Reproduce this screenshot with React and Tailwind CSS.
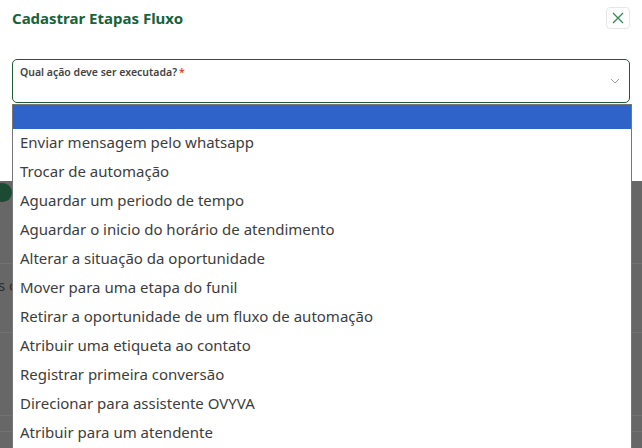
const options = [
  'Enviar mensagem pelo whatsapp',
  'Trocar de automação',
  'Aguardar um periodo de tempo',
  'Aguardar o inicio do horário de atendimento',
  'Alterar a situação da oportunidade',
  'Mover para uma etapa do funil',
  'Retirar a oportunidade de um fluxo de automação',
  'Atribuir uma etiqueta ao contato',
  'Registrar primeira conversão',
  'Direcionar para assistente OVYVA',
  'Atribuir para um atendente',
]

function OptionList() {
  return (
    <div className="absolute left-[12px] top-[104px] w-[620px] border-x border-t border-[#767676] bg-white">
      <div className="h-[24px] bg-[#2f63c9]" />
      {options.map((option) => (
        <div
          key={option}
          className="flex h-[29px] items-center pl-[7px] pb-[2px] text-[15px] text-[#3d3d3d]"
        >
          {option}
        </div>
      ))}
    </div>
  )
}

export default function App() {
  return (
    <div
      className="relative flex h-[448px] w-full flex-col overflow-hidden bg-[#676767]"
      style={{ fontFamily: '"Noto Sans", sans-serif' }}
    >
      <div className="h-[181px] bg-white px-3">
        <div className="flex h-[36px] items-center justify-between">
          <h1 className="text-[15px] font-bold text-[#17633a]">
            Cadastrar Etapas Fluxo
          </h1>
          <button
            className="flex h-[22px] w-[24px] items-center justify-center rounded border border-[#e6e6e6] text-[#2f8a55]"
            type="button"
          >
            <svg width="12" height="12" viewBox="0 0 12 12" fill="none" stroke="currentColor" strokeWidth="1.3">
              <path d="M1 1l10 10M11 1L1 11" />
            </svg>
          </button>
        </div>

        <div className="mt-[23px] flex h-[44px] items-start justify-between rounded-[5px] border border-[#1f5a34] pl-[7px] pr-[9px]">
          <span className="mt-[5px] text-[10.5px] font-semibold text-[#444]">
            Qual ação deve ser executada?
            <span className="ml-[2px] align-top text-[#e0422b]">*</span>
          </span>
          <svg className="mt-[16px]" width="10" height="10" viewBox="0 0 10 10" fill="none" stroke="#9a9a9a" strokeWidth="1">
            <path d="M1 3l4 4 4-4" />
          </svg>
        </div>

        <div className="mt-[19px] h-[60px] rounded-t-lg border border-[#ececec]" />
      </div>

      <div className="flex flex-1 flex-col">
        <div className="-ml-[7px] mt-[2px] h-[19px] w-[19px] rounded-full bg-[#1c4a33]" />
        <div className="mt-[61px] h-px bg-[#727272]" />
        <div className="-ml-[2px] mt-[11px] text-[15px] leading-5 text-[#2c2c2c]">s c</div>
        <div className="mt-[37px] h-px bg-[#727272]" />
        <div className="mt-[82px] h-px bg-[#727272]" />
        <div className="mt-[15px] h-px bg-[#727272]" />
      </div>

      <OptionList />
    </div>
  )
}
